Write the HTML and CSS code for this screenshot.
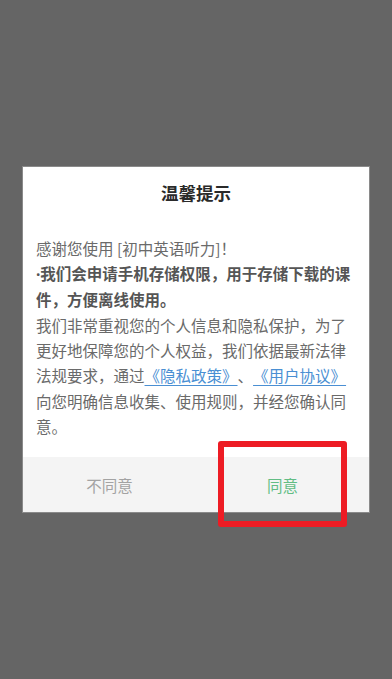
FILE: index.html
```html
<!DOCTYPE html>
<html lang="zh-CN">

<head>
    <meta http-equiv="Content-Type" content="text/html;charset=UTF-8">
    <meta name="viewport" content="width=device-width, initial-scale=1.0">
    <title>温馨提示</title>
    <link rel="stylesheet" href="styles.css">
</head>

<body>
    <div class="dialog">
        <h1 class="dialog-title">温馨提示</h1>

        <div class="dialog-body">
            <p class="dialog-text">感谢您使用 [初中英语听力]！</p>
            <p class="dialog-text dialog-text-strong"><span class="bullet">·</span>我们会申请手机存储权限，用于存储下载的课件，方便离线使用。</p>
            <p class="dialog-text">
                我们非常重视您的个人信息和隐私保护，为了更好地保障您的个人权益，我们依据最新法律法规要求，通过<a class="dialog-link" href="#">《隐私政策》</a>、<a class="dialog-link" href="#">《用户协议》</a>向您明确信息收集、使用规则，并经您确认同意。
            </p>
        </div>

        <div class="dialog-actions">
            <button class="dialog-button">不同意</button>
            <button class="dialog-button dialog-button-primary">同意</button>
        </div>

        <div class="highlight"></div>
    </div>
</body>

</html>
```

FILE: styles.css
```css
html,
body {
    height: 100%;
}

body {
    margin: 0;
    background-color: #656565;
    font-family: "Noto Sans CJK SC", "Noto Sans", sans-serif;
    text-spacing-trim: space-all;
    display: flex;
    justify-content: center;
    align-items: center;
}

.dialog {
    position: relative;
    width: 346px;
    background-color: #ffffff;
    box-shadow: 0 0 0 1px #8a8a8a;
}

.dialog-title {
    margin: 0;
    padding-top: 14px;
    font-size: 17.5px;
    line-height: 24px;
    font-weight: 700;
    color: #2a2a2a;
    text-align: center;
}

.dialog-body {
    padding: 31px 13px 18px;
}

.dialog-text {
    margin: 0;
    font-size: 15.5px;
    line-height: 25.3px;
    color: #6a6a6a;
}

.dialog-text-strong {
    font-weight: 700;
    color: #555555;
}

.bullet {
    font-family: "Noto Sans", sans-serif;
}

.dialog-link {
    color: #4a8fd3;
    text-decoration: underline;
    text-underline-offset: 3px;
}

.dialog-actions {
    display: grid;
    grid-template-columns: 1fr 1fr;
    height: 55px;
    background-color: #f4f4f4;
}

.dialog-button {
    border: 0;
    background: none;
    font-family: inherit;
    font-size: 15.5px;
    color: #a3a3a3;
    padding: 0;
}

.dialog-button-primary {
    color: #62bd84;
}

/* red annotation frame over the agree button */
.highlight {
    position: absolute;
    left: 195px;
    top: 274px;
    width: 117px;
    height: 74px;
    border: 6.5px solid #ed1c24;
    border-radius: 3px;
}
```
